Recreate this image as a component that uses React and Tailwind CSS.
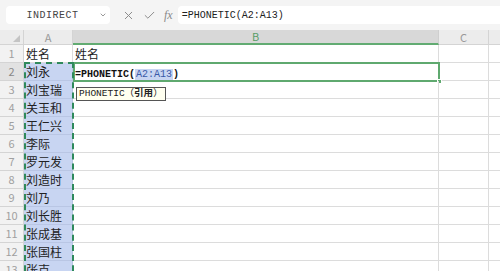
import { X, Check, ChevronDown } from 'lucide-react'

const names = ['刘永','刘宝瑞','关玉和','王仁兴','李际','罗元发','刘造时','刘乃','刘长胜','张成基','张国柱','张克']

const cjk = { fontFamily: '"Noto Sans CJK SC", "Noto Sans", sans-serif' }
const mono = { fontFamily: '"Liberation Mono", "Noto Sans CJK SC", monospace' }

function RowHead({ n, active }) {
  return (
    <div className={`w-[24px] shrink-0 h-full flex items-center justify-center text-[11px] border-r border-b border-[#d4d4d4] ${active ? 'bg-[#e2e2e2] text-[#888]' : 'bg-[#f2f2f2] text-[#a0a0a0]'}`} style={cjk}>{n}</div>
  )
}

export default function App() {
  return (
    <div className="w-[500px] h-[271px] overflow-hidden bg-white select-none">
      {/* formula bar */}
      <div className="h-[30px] bg-[#f4f4f4] flex items-center">
        <div className="ml-[6px] w-[104px] h-[18px] bg-white rounded-sm flex items-center relative">
          <span className="flex-1 text-center text-[10px] text-[#444] tracking-[0.5px]" style={mono}>INDIRECT</span>
          <ChevronDown size={8} strokeWidth={3} className="text-[#999] mr-[3px]" />
        </div>
        <div className="flex items-center ml-[12px] gap-[8px] text-[#8a8a8a]">
          <X size={13} strokeWidth={1.8} />
          <Check size={13} strokeWidth={1.8} />
          <span className="italic text-[12px] font-serif" style={{ fontFamily: '"Liberation Serif", serif' }}>fx</span>
        </div>
        <div className="ml-[5px] flex-1 h-[18px] bg-white rounded-l-sm flex items-center pl-[4px] text-[10px] text-[#222]" style={mono}>=PHONETIC(A2:A13)</div>
      </div>

      {/* column header */}
      <div className="h-[15px] flex bg-[#ececec] text-[11px] text-[#999]" style={cjk}>
        <div className="w-[24px] shrink-0 border-r border-b border-[#d4d4d4] relative">
          <div className="absolute right-[3px] bottom-[2px] w-0 h-0 border-l-[7px] border-l-transparent border-b-[7px] border-b-[#c4c4c4]" />
        </div>
        <div className="w-[49px] shrink-0 border-r border-b border-[#d4d4d4] flex items-center justify-center">A</div>
        <div className="w-[366px] shrink-0 bg-[#d8d8d8] border-r border-[#cfcfcf] border-b-2 border-b-[#62ab72] flex items-center justify-center text-[#5a9e68]">B</div>
        <div className="w-[50px] shrink-0 border-r border-b border-[#d4d4d4] flex items-center justify-center">C</div>
        <div className="flex-1 border-b border-[#d4d4d4]" />
      </div>

      {/* grid */}
      <div className="relative">
        {/* row 1 */}
        <div className="h-[18px] flex">
          <RowHead n={1} />
          <div className="w-[49px] shrink-0 border-r border-b border-[#dcdcdc] text-[12px] text-[#222] pl-[2px] leading-[17px]" style={cjk}>姓名</div>
          <div className="w-[366px] shrink-0 border-r border-b border-[#dcdcdc] text-[12px] text-[#222] pl-[2px] leading-[17px]" style={cjk}>姓名</div>
          <div className="w-[50px] shrink-0 border-r border-b border-[#dcdcdc]" />
          <div className="flex-1 border-b border-[#dcdcdc]" />
        </div>
        {names.map((nm, i) => (
          <div key={nm} className="h-[18px] flex relative">
            <RowHead n={i + 2} active={i === 0} />
            <div className="w-[49px] shrink-0 bg-[#c8d5f2] border-r border-b border-[#b9c6e4] text-[12px] text-[#222] pl-[2px] leading-[17px]" style={cjk}>{nm}</div>
            <div className="w-[366px] shrink-0 border-r border-b border-[#dcdcdc] pl-[2px] leading-[17px]">
              {i === 0 && (
                <span className="text-[10px] font-bold text-[#111]" style={mono}>
                  =PHONETIC(<span className="bg-[#c8d5f2] text-[#3a5aa8] font-normal px-[1px]">A2:A13</span>)
                </span>
              )}
            </div>
            <div className="w-[50px] shrink-0 border-r border-b border-[#dcdcdc]" />
            <div className="flex-1 border-b border-[#dcdcdc]" />
            {i === 0 && (
              <div className="absolute left-[73px] top-[-1px] w-[367px] h-[20px] border-2 border-[#5fa96f] pointer-events-none">
                <div className="absolute right-[-4px] bottom-[-4px] w-[5px] h-[5px] bg-[#5fa96f] border border-white" />
              </div>
            )}
          </div>
        ))}

        {/* copy selection marquee */}
        <div className="absolute left-[24px] top-[17px] w-[50px] h-[260px] border-2 border-dashed border-b-0 border-[#2f8a5c] pointer-events-none" />

        {/* function tip */}
        <div className="absolute left-[76px] top-[42px] h-[14px] px-[2px] bg-[#ffffef] border border-[#555] flex items-center text-[9.5px] text-[#222]" style={mono}>
          PHONETIC（<span className="font-bold">引用</span>）
        </div>
      </div>
    </div>
  )
}
